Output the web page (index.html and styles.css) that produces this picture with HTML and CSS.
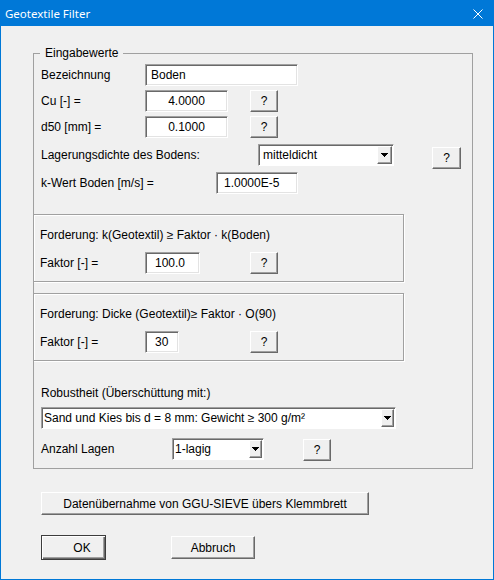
FILE: index.html
```html
<!DOCTYPE html>
<html lang="de">
<head>
<meta charset="utf-8">
<title>Geotextile Filter</title>
<link rel="stylesheet" href="styles.css">
</head>
<body>
<div class="window">
  <div class="titlebar">
    <span class="title">Geotextile Filter</span>
    <span class="close">
      <svg width="10" height="10" viewBox="0 0 10 10"><path d="M0.5 0.5L9.5 9.5M9.5 0.5L0.5 9.5" stroke="#fff" stroke-width="1" fill="none"/></svg>
    </span>
  </div>
  <div class="client">
    <fieldset class="group">
      <legend>Eingabewerte</legend>

      <div class="row">
        <label class="lbl w104">Bezeichnung</label>
        <input class="field f-name" value="Boden">
      </div>
      <div class="row mt4">
        <label class="lbl w104">Cu [-] =</label>
        <input class="field f-num" value="4.0000">
        <button class="btn q q-num">?</button>
      </div>
      <div class="row mt4">
        <label class="lbl w104">d50 [mm] =</label>
        <input class="field f-num" value="0.1000">
        <button class="btn q q-num">?</button>
      </div>
      <div class="row mt6">
        <label class="lbl w217">Lagerungsdichte des Bodens:</label>
        <div class="combo c-dens"><span class="combo-text">mitteldicht</span><span class="arrow"><svg width="7" height="4" viewBox="0 0 7 4" shape-rendering="crispEdges"><path d="M0 0H7L3.5 4Z" fill="#000"/></svg></span></div>
        <button class="btn q q-dens">?</button>
      </div>
      <div class="row mt6">
        <label class="lbl w175">k-Wert Boden [m/s] =</label>
        <input class="field f-k" value="1.0000E-5">
      </div>

      <div class="sub mt20">
        <div class="sub-title">Forderung: k(Geotextil) ≥ Faktor · k(Boden)</div>
        <div class="row mt10">
          <label class="lbl w105">Faktor [-] =</label>
          <input class="field f-fak1" value="100.0">
          <button class="btn q q-fak1">?</button>
        </div>
      </div>

      <div class="sub mt11">
        <div class="sub-title">Forderung: Dicke (Geotextil)≥ Faktor · O(90)</div>
        <div class="row mt10">
          <label class="lbl w105">Faktor [-] =</label>
          <input class="field f-fak2" value="30">
          <button class="btn q q-fak2">?</button>
        </div>
      </div>

      <div class="plain mt25">Robustheit (Überschüttung mit:)</div>
      <div class="combo c-robust mt7"><span class="combo-text tight">Sand und Kies bis d = 8 mm: Gewicht ≥ 300 g/m²</span><span class="arrow narrow"><svg width="7" height="4" viewBox="0 0 7 4" shape-rendering="crispEdges"><path d="M0 0H7L3.5 4Z" fill="#000"/></svg></span></div>
      <div class="row mt9">
        <label class="lbl w131">Anzahl Lagen</label>
        <div class="combo c-layers"><span class="combo-text tight">1-lagig</span><span class="arrow narrow"><svg width="7" height="4" viewBox="0 0 7 4" shape-rendering="crispEdges"><path d="M0 0H7L3.5 4Z" fill="#000"/></svg></span></div>
        <button class="btn q q-layers">?</button>
      </div>
    </fieldset>

    <button class="btn wide">Datenübernahme von GGU-SIEVE übers Klemmbrett</button>

    <div class="actions">
      <button class="btn default ok">OK</button>
      <button class="btn cancel">Abbruch</button>
    </div>
  </div>
</div>
</body>
</html>
```

FILE: styles.css
```css
* {
  box-sizing: border-box;
}

html,
body {
  margin: 0;
  padding: 0;
}

body {
  width: 494px;
  height: 580px;
  background: #f0f0f0;
  color: #000;
  font: 12px/14px "Liberation Sans", Arial, sans-serif;
}

/* dialog frame */
.window {
  width: 494px;
  height: 580px;
  border: 1px solid #0078d7;
  border-top: 0;
  background: #f0f0f0;
  display: flex;
  flex-direction: column;
}

.titlebar {
  height: 26px;
  flex: none;
  background: #0078d7;
  color: #fff;
  display: flex;
  align-items: center;
  padding-left: 4px;
  font: 11.5px/15px "Noto Sans", "Liberation Sans", sans-serif;
}

.close {
  margin-left: auto;
  margin-right: 10px;
  width: 10px;
  height: 10px;
  margin-top: 1px;
  display: flex;
}

.client {
  flex: 1;
  padding: 20px 0 0 32px;
}

/* group box */
.group {
  width: 440px;
  margin: 0;
  padding: 3px 0 8px 7px;
  border: 1px solid #a0a0a0;
  min-width: 0;
}

.group legend {
  margin-left: -1px;
  padding: 0 5px;
  line-height: 15px;
}

.row {
  display: flex;
  align-items: center;
  height: 22px;
}

.lbl {
  flex: none;
  white-space: nowrap;
}

.w104 { width: 104px; }
.w105 { width: 105px; }
.w131 { width: 131px; }
.w175 { width: 175px; }
.w217 { width: 217px; }

.mt4 { margin-top: 4px; }
.mt6 { margin-top: 6px; }
.mt7 { margin-top: 7px; }
.mt9 { margin-top: 9px; }
.mt10 { margin-top: 10px; }
.mt11 { margin-top: 11px; }
.mt20 { margin-top: 20px; }
.mt25 { margin-top: 25px; }

/* sunken edit fields */
.field {
  flex: none;
  height: 22px;
  margin: 0;
  padding: 0 2px;
  font: inherit;
  color: #000;
  background: #fff;
  border: 1px solid;
  border-color: #a0a0a0 #fff #fff #a0a0a0;
  box-shadow: inset 1px 1px 0 #696969, inset -1px -1px 0 #e3e3e3;
  outline: none;
}

.f-name { width: 153px; padding-left: 5px; }
.f-num { width: 83px; text-align: center; }
.f-k { width: 82px; padding-left: 7px; }
.f-fak1 { width: 55px; padding-left: 9px; }
.f-fak2 { width: 34px; padding-left: 9px; }

/* raised push buttons */
.btn {
  flex: none;
  height: 22px;
  margin: 0;
  padding: 0;
  font: inherit;
  color: #000;
  background: #f0f0f0;
  border: 1px solid;
  border-color: #fff #696969 #696969 #fff;
  box-shadow: inset -1px -1px 0 #a0a0a0;
  display: flex;
  align-items: center;
  justify-content: center;
}

.q { width: 28px; }
.q-num { margin-left: 22px; }
.q-dens { width: 29px; margin-left: 38px; margin-top: 6px; }
.q-fak1 { margin-left: 50px; }
.q-fak2 { margin-left: 71px; }
.q-layers { margin-left: 39px; margin-top: 2px; }

/* drop-down lists */
.combo {
  flex: none;
  height: 22px;
  display: flex;
  align-items: stretch;
  background: #fff;
  border: 1px solid;
  border-color: #a0a0a0 #fff #fff #a0a0a0;
  box-shadow: inset 1px 1px 0 #696969;
  padding: 1px 1px 1px 1px;
}

.combo-text {
  flex: 1;
  display: flex;
  align-items: center;
  padding-left: 3px;
  white-space: nowrap;
  overflow: hidden;
}

.combo-text.tight {
  padding-left: 1px;
}

.arrow {
  flex: none;
  width: 15px;
  background: #f0f0f0;
  border: 1px solid;
  border-color: #fff #696969 #696969 #fff;
  box-shadow: inset -1px -1px 0 #a0a0a0;
  display: flex;
  align-items: center;
  justify-content: center;
}

.arrow.narrow {
  width: 13px;
}

.c-dens { width: 136px; }
.c-robust { width: 355px; }
.c-layers { width: 92px; }

/* nested requirement boxes */
.sub {
  margin-left: -8px;
  width: 371px;
  border: 1px solid #a0a0a0;
  box-shadow: inset 1px 1px 0 #fff, 1px 1px 0 #fff;
  padding: 13px 0 7px 6px;
}

.sub-title,
.plain {
  white-space: nowrap;
}

/* bottom buttons */
.wide {
  width: 328px;
  height: 23px;
  margin: 23px 0 0 8px;
}

.actions {
  display: flex;
  align-items: center;
  margin: 20px 0 0 8px;
}

.ok {
  width: 65px;
  height: 25px;
  padding-left: 17px;
}

.btn.default {
  border: 1px solid #3c3c3c;
  box-shadow: inset 1px 1px 0 #fff, inset -1px -1px 0 #696969, inset -2px -2px 0 #a0a0a0;
}

.cancel {
  width: 84px;
  height: 23px;
  margin-left: 65px;
}
```
